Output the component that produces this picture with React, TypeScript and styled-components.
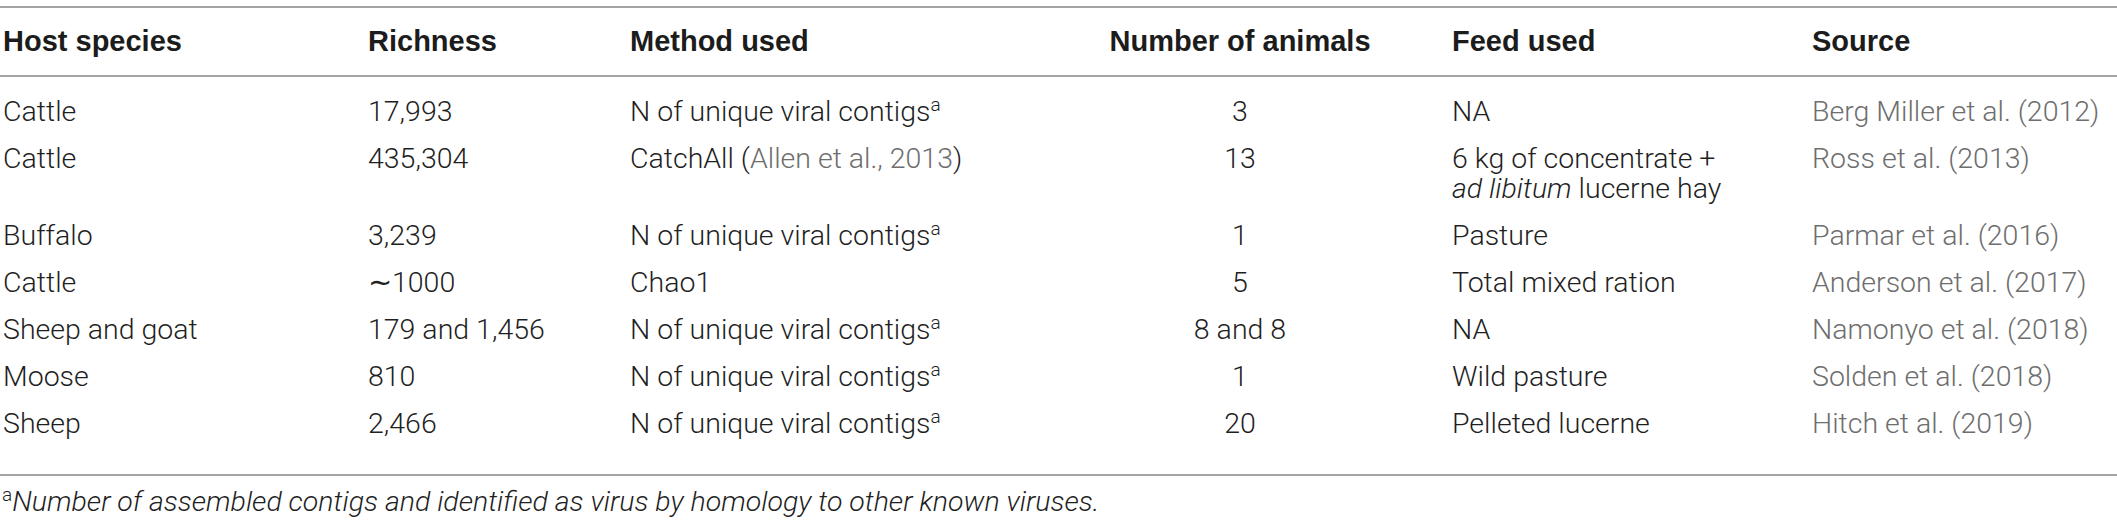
import styled, { createGlobalStyle } from "styled-components"

const GlobalStyle = createGlobalStyle`
    body {
        margin: 0;
        background: #ffffff;
    }
`

const Page = styled.div`
    padding-top: 6px;
    font-family: Roboto, "Liberation Sans", Arial, sans-serif;
    color: #1f1f1f;
`

const Table = styled.table`
    width: 100%;
    border-collapse: collapse;
    table-layout: fixed;
    border-top: 2px solid #a4a4a4;
    border-bottom: 2px solid #a4a4a4;
`

const Col = styled.col<{ $w?: number }>`
    width: ${(p) => (p.$w ? `${p.$w}px` : "auto")};
`

const HeadCell = styled.th<{ $center?: boolean; $indent?: number }>`
    padding: 18px 0 19px ${(p) => p.$indent ?? 0}px;
    font-family: "Liberation Sans", Arial, sans-serif;
    font-size: 29px;
    line-height: 30px;
    font-weight: bold;
    color: #1c1c1c;
    text-align: ${(p) => (p.$center ? "center" : "left")};
    white-space: nowrap;
    border-bottom: 2px solid #a4a4a4;
`

const Row = styled.tr`
    &:first-child td {
        padding-top: 20px;
    }
    &:last-child td {
        padding-bottom: 35px;
    }
`

const Cell = styled.td<{ $center?: boolean; $indent?: number; $muted?: boolean }>`
    padding: 8.5px 0 8.5px ${(p) => p.$indent ?? 0}px;
    font-size: 28.5px;
    font-weight: 300;
    line-height: 30px;
    vertical-align: top;
    text-align: ${(p) => (p.$center ? "center" : "left")};
    color: ${(p) => (p.$muted ? "#6e6e6e" : "#1f1f1f")};
    white-space: nowrap;
`

const Cite = styled.span`
    color: #6e6e6e;
`

const Sup = styled.sup`
    font-size: 19px;
    line-height: 0;
    vertical-align: 10px;
    font-style: normal;
`

const Footnote = styled.p`
    margin: 0;
    padding: 11px 0 0 2px;
    font-size: 28.5px;
    font-weight: 300;
    line-height: 30px;
    font-style: italic;
`

type Entry = {
    host: string
    richness: string
    method: React.ReactNode
    animals: string
    feed: React.ReactNode
    source: string
}

const contigs = <>N of unique viral contigs<Sup>a</Sup></>

const entries: Entry[] = [
    { host: "Cattle", richness: "17,993", method: contigs, animals: "3", feed: "NA", source: "Berg Miller et al. (2012)" },
    {
        host: "Cattle",
        richness: "435,304",
        method: <>CatchAll (<Cite>Allen et al., 2013</Cite>)</>,
        animals: "13",
        feed: <>6 kg of concentrate +<br /><i>ad libitum</i> lucerne hay</>,
        source: "Ross et al. (2013)",
    },
    { host: "Buffalo", richness: "3,239", method: contigs, animals: "1", feed: "Pasture", source: "Parmar et al. (2016)" },
    { host: "Cattle", richness: "\u223C1000", method: "Chao1", animals: "5", feed: "Total mixed ration", source: "Anderson et al. (2017)" },
    { host: "Sheep and goat", richness: "179 and 1,456", method: contigs, animals: "8 and 8", feed: "NA", source: "Namonyo et al. (2018)" },
    { host: "Moose", richness: "810", method: contigs, animals: "1", feed: "Wild pasture", source: "Solden et al. (2018)" },
    { host: "Sheep", richness: "2,466", method: contigs, animals: "20", feed: "Pelleted lucerne", source: "Hitch et al. (2019)" },
]

export default function App() {
    return <Page>
        <GlobalStyle />
        <Table>
            <colgroup>
                <Col $w={368} />
                <Col $w={262} />
                <Col $w={460} />
                <Col $w={300} />
                <Col $w={422} />
                <Col />
            </colgroup>
            <thead>
                <tr>
                    <HeadCell $indent={3}>Host species</HeadCell>
                    <HeadCell>Richness</HeadCell>
                    <HeadCell>Method used</HeadCell>
                    <HeadCell $center>Number of animals</HeadCell>
                    <HeadCell $indent={62}>Feed used</HeadCell>
                    <HeadCell>Source</HeadCell>
                </tr>
            </thead>
            <tbody>
                {entries.map((e, i) => (
                    <Row key={i}>
                        <Cell $indent={3}>{e.host}</Cell>
                        <Cell>{e.richness}</Cell>
                        <Cell>{e.method}</Cell>
                        <Cell $center>{e.animals}</Cell>
                        <Cell $indent={62}>{e.feed}</Cell>
                        <Cell $muted>{e.source}</Cell>
                    </Row>
                ))}
            </tbody>
        </Table>
        <Footnote>
            <Sup>a</Sup>Number of assembled contigs and identified as virus by homology to other known viruses.
        </Footnote>
    </Page>
}
